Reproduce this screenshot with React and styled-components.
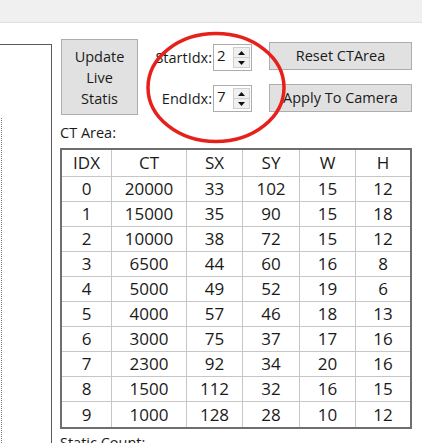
import React from "react";
import styled, { createGlobalStyle } from "styled-components";

const Global = createGlobalStyle`
  html, body, #root { margin: 0; padding: 0; height: 100%; }
  body {
    background: #ffffff;
    font-family: "Open Sans", "Noto Sans", "Liberation Sans", sans-serif;
    color: #1a1a1a;
    overflow: hidden;
  }
`;

const Page = styled.div`
  position: relative;
  width: 422px;
  height: 443px;
  overflow: hidden;
  display: flex;
  flex-direction: column;
`;

const TitleStrip = styled.div`
  height: 22px;
  flex: none;
  background: #f0f0f0;
  border-bottom: 1px solid #e0e0e0;
`;

const Body = styled.div`
  flex: 1;
  display: flex;
  min-height: 0;
`;

const SidePanel = styled.div`
  width: 51px;
  margin-top: 21px;
  flex: none;
  border-top: 1px solid #5a5a5a;
  border-right: 1px solid #5a5a5a;
  display: flex;
  flex-direction: column;
`;

const DottedEdge = styled.div`
  flex: 1;
  margin: 73px 0 0 1px;
  border-left: 1px dotted #7a7a7a;
`;

const Content = styled.div`
  margin-left: 8px;
  padding-top: 16px;
  display: flex;
  flex-direction: column;
`;

const ControlsRow = styled.div`
  display: flex;
  align-items: flex-start;
`;

const PushButton = styled.button`
  box-sizing: border-box;
  margin: 0;
  padding: 0;
  background: #e1e1e1;
  border: 1px solid #adadad;
  font-family: inherit;
  font-size: 14.5px;
  line-height: ${(p) => p.$lh || 20}px;
  color: #1a1a1a;
  width: ${(p) => p.$w}px;
  height: ${(p) => p.$h}px;
  text-align: center;
  cursor: default;
`;

const UpdateButton = styled(PushButton)`
  margin-left: 1px;
  white-space: pre-line;
`;

const SpinGrid = styled.div`
  width: 114px;
  padding-top: 5px;
  display: grid;
  grid-template-columns: 1fr 39px;
  row-gap: 14px;
  align-items: center;
`;

const SpinLabel = styled.span`
  justify-self: end;
  font-size: 14.5px;
  line-height: 20px;
  padding-right: 1px;
`;

const SpinBox = styled.div`
  box-sizing: border-box;
  height: 27px;
  border: 1px solid #acacac;
  background: #fff;
  display: flex;
  padding: 2px 1px 2px 0;
`;

const SpinValue = styled.span`
  flex: 1;
  padding-left: 3px;
  font-size: 15px;
  line-height: 17px;
`;

const SpinArrows = styled.div`
  width: 17px;
  display: flex;
  flex-direction: column;
`;

const SpinArrow = styled.div`
  flex: 1;
  box-sizing: border-box;
  background: #f0f0f0;
  border: 1px solid #cfcfcf;
  display: flex;
  align-items: center;
  justify-content: center;
  & + & { border-top: none; }
`;

const ButtonStack = styled.div`
  margin-left: 17px;
  padding-top: 3px;
  display: flex;
  flex-direction: column;
  gap: 14px;
`;

const SectionLabel = styled.div`
  font-size: 14.5px;
  line-height: 20px;
  margin-top: ${(p) => p.$top}px;
`;

const Grid = styled.table`
  margin-top: 5px;
  width: 352px;
  table-layout: fixed;
  border-collapse: separate;
  border-spacing: 0;
  border: 2px solid #6e6e6e;
  font-size: 17px;
  color: #1a1a1a;
`;

const Cell = styled.td`
  box-sizing: border-box;
  padding: 0;
  height: ${(p) => (p.$head ? 27 : 25)}px;
  text-align: center;
  vertical-align: middle;
  line-height: 22px;
  font-weight: 400;
  background: #fff;
  border-right: ${(p) => (p.$lastCol ? "none" : "1px solid #c6c6c6")};
  border-bottom: ${(p) => (p.$lastRow ? "none" : "1px solid #c6c6c6")};
`;

const Mark = styled.svg`
  position: absolute;
  left: 144px;
  top: 29px;
  pointer-events: none;
`;

const Arrow = ({ up }) => (
  <svg width="7" height="4" viewBox="0 0 7 4">
    <path d={up ? "M0 4 L3.5 0 L7 4 Z" : "M0 0 L3.5 4 L7 0 Z"} fill="#111" />
  </svg>
);

const Spinner = ({ value }) => (
  <SpinBox>
    <SpinValue>{value}</SpinValue>
    <SpinArrows>
      <SpinArrow>
        <Arrow up />
      </SpinArrow>
      <SpinArrow>
        <Arrow />
      </SpinArrow>
    </SpinArrows>
  </SpinBox>
);

const columns = [
  { key: "IDX", w: 50 },
  { key: "CT", w: 75 },
  { key: "SX", w: 56 },
  { key: "SY", w: 57 },
  { key: "W", w: 56 },
  { key: "H", w: 54 },
];

const rows = [
  [0, 20000, 33, 102, 15, 12],
  [1, 15000, 35, 90, 15, 18],
  [2, 10000, 38, 72, 15, 12],
  [3, 6500, 44, 60, 16, 8],
  [4, 5000, 49, 52, 19, 6],
  [5, 4000, 57, 46, 18, 13],
  [6, 3000, 75, 37, 17, 16],
  [7, 2300, 92, 34, 20, 16],
  [8, 1500, 112, 32, 16, 15],
  [9, 1000, 128, 28, 10, 12],
];

export default function App() {
  return (
    <Page>
      <Global />
      <TitleStrip />
      <Body>
        <SidePanel>
          <DottedEdge />
        </SidePanel>
        <Content>
          <ControlsRow>
            <UpdateButton $w={77} $h={76} $lh={21}>
              {"Update\nLive\nStatis"}
            </UpdateButton>
            <SpinGrid>
              <SpinLabel>StartIdx:</SpinLabel>
              <Spinner value="2" />
              <SpinLabel>EndIdx:</SpinLabel>
              <Spinner value="7" />
            </SpinGrid>
            <ButtonStack>
              <PushButton $w={143} $h={28}>Reset CTArea</PushButton>
              <PushButton $w={143} $h={28}>Apply To Camera</PushButton>
            </ButtonStack>
          </ControlsRow>
          <SectionLabel $top={8}>CT Area:</SectionLabel>
          <Grid>
            <colgroup>
              {columns.map((c) => (
                <col key={c.key} style={{ width: c.w }} />
              ))}
            </colgroup>
            <tbody>
              <tr>
                {columns.map((c, i) => (
                  <Cell as="th" key={c.key} $head $lastCol={i === columns.length - 1}>
                    {c.key}
                  </Cell>
                ))}
              </tr>
              {rows.map((r, ri) => (
                <tr key={ri}>
                  {r.map((v, ci) => (
                    <Cell
                      key={ci}
                      $lastCol={ci === r.length - 1}
                      $lastRow={ri === rows.length - 1}
                    >
                      {v}
                    </Cell>
                  ))}
                </tr>
              ))}
            </tbody>
          </Grid>
          <SectionLabel $top={4}>Static Count:</SectionLabel>
        </Content>
      </Body>
      <Mark width="146" height="120" viewBox="0 0 146 120">
        <ellipse cx="72" cy="58.5" rx="68" ry="54" fill="none" stroke="#e8201c" strokeWidth="3.5" />
      </Mark>
    </Page>
  );
}
